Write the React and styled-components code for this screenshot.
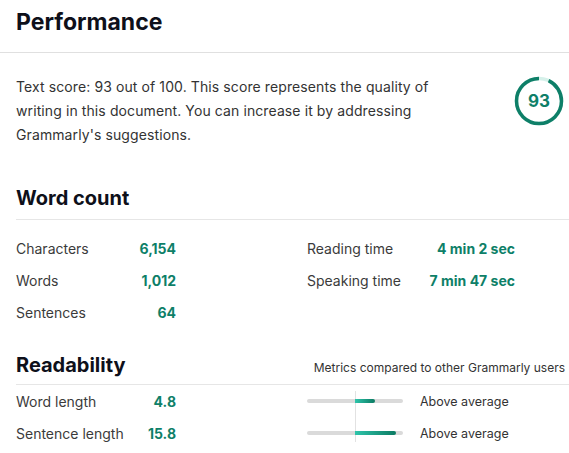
import React from "react"
import styled, { createGlobalStyle } from "styled-components"

const GlobalStyle = createGlobalStyle`
    * { box-sizing: border-box; }
    body {
        margin: 0;
        background: #fff;
        font-family: Inter, "Noto Sans", sans-serif;
        color: #0e101a;
    }`

const Page = styled.div`
    width: 569px;
    height: 453px;
    overflow: hidden;
    background: #fff;`

const TopBar = styled.div`
    padding: 8px 16px 16px;
    border-bottom: 1px solid #e0e0e0;`

const Title = styled.h1`
    margin: 0;
    font-size: 23px;
    line-height: 28px;
    font-weight: 700;
    color: #0e101a;`

const Body = styled.div`
    padding: 22px 0 0 16px;`

const Summary = styled.div`
    display: flex;
    justify-content: space-between;
    align-items: flex-start;
    padding-right: 5px;`

const SummaryText = styled.p`
    margin: 0;
    width: 450px;
    font-size: 14px;
    letter-spacing: 0.1px;
    line-height: 24px;
    color: #333;`

const ScoreWrap = styled.div`
    position: relative;
    width: 50px;
    height: 50px;
    margin-top: 1px;
    display: flex;
    align-items: center;
    justify-content: center;
    svg { position: absolute; inset: 0; }`

const ScoreNum = styled.span`
    position: relative;
    font-size: 17px;
    font-weight: 700;
    color: #0e7f68;`

const SectionHead = styled.div`
    display: flex;
    justify-content: space-between;
    align-items: baseline;
    margin-top: ${(p) => p.$top}px;
    padding-bottom: ${(p) => p.$pad}px;
    border-bottom: 1px solid #e6e6e6;`

const SectionTitle = styled.h2`
    margin: 0;
    font-size: 20px;
    line-height: 26px;
    font-weight: 700;
    color: #0e101a;`

const Note = styled.span`
    font-size: 12px;
    color: #333;
    margin-right: 4px;`

const CountGrid = styled.div`
    display: grid;
    grid-template-columns: 160px 208px;
    grid-auto-rows: 32px;
    column-gap: 131px;
    margin-top: 12px;`

const Pair = styled.div`
    display: flex;
    justify-content: space-between;
    align-items: center;
    width: ${(p) => p.$w || "auto"};`

const Label = styled.span`
    font-size: 14px;
    color: #3b3b3b;`

const Value = styled.span`
    font-size: 14px;
    font-weight: 700;
    color: #0e7f68;`

const ReadRow = styled.div`
    display: flex;
    align-items: center;
    height: 32px;`

const Track = styled.div`
    position: relative;
    width: 96px;
    height: 4px;
    margin-left: 131px;
    border-radius: 2px;
    background: #dadada;
    &::before {
        content: "";
        position: absolute;
        left: 48px;
        width: 1px;
        top: ${(p) => (p.$first ? -8 : -14)}px;
        bottom: ${(p) => (p.$first ? -14 : -7)}px;
        background: #e2e2e2;
    }`

const Fill = styled.div`
    position: absolute;
    left: 48px;
    top: 0;
    height: 4px;
    border-radius: 0 2px 2px 0;
    background: linear-gradient(90deg, #2ec4aa, #0b7a62);`

const Status = styled.span`
    margin-left: 17px;
    font-size: 12.5px;
    color: #333;`

const counts = [
    ["Characters", "6,154", "Reading time", "4 min 2 sec"],
    ["Words", "1,012", "Speaking time", "7 min 47 sec"],
    ["Sentences", "64"],
]

const readability = [
    { label: "Word length", value: "4.8", fill: 20 },
    { label: "Sentence length", value: "15.8", fill: 41 },
]

const ScoreRing = ({ score }) => {
    const r = 22.5
    const c = 2 * Math.PI * r
    const on = (score / 100) * c
    return (
        <ScoreWrap>
            <svg width="50" height="50" viewBox="0 0 50 50">
                <circle cx="25" cy="25" r={r} fill="none" stroke="#d6f1ea" strokeWidth="3.5" />
                <circle cx="25" cy="25" r={r} fill="none" stroke="#0e7f68" strokeWidth="3.5"
                    strokeDasharray={`${on} ${c}`}
                    strokeDashoffset={-(c - on)}
                    transform="rotate(-90 25 25)" />
            </svg>
            <ScoreNum>{score}</ScoreNum>
        </ScoreWrap>
    )
}

export default function App () {
    return (
        <Page>
            <GlobalStyle />
            <TopBar>
                <Title>Performance</Title>
            </TopBar>
            <Body>
                <Summary>
                    <SummaryText>
                        Text score: 93 out of 100. This score represents the quality of
                        writing in this document. You can increase it by addressing
                        Grammarly's suggestions.
                    </SummaryText>
                    <ScoreRing score={93} />
                </Summary>

                <SectionHead $top={38} $pad={8}>
                    <SectionTitle>Word count</SectionTitle>
                </SectionHead>
                <CountGrid>
                    {counts.map(([l, v, l2, v2]) => (
                        <React.Fragment key={l}>
                            <Pair>
                                <Label>{l}</Label>
                                <Value>{v}</Value>
                            </Pair>
                            {l2 ? (
                                <Pair>
                                    <Label>{l2}</Label>
                                    <Value>{v2}</Value>
                                </Pair>
                            ) : <div />}
                        </React.Fragment>
                    ))}
                </CountGrid>

                <SectionHead $top={24} $pad={6}>
                    <SectionTitle>Readability</SectionTitle>
                    <Note>Metrics compared to other Grammarly users</Note>
                </SectionHead>
                {readability.map((r, i) => (
                    <ReadRow key={r.label}>
                        <Pair $w="160px">
                            <Label>{r.label}</Label>
                            <Value>{r.value}</Value>
                        </Pair>
                        <Track $first={i === 0}>
                            <Fill style={{ width: r.fill }} />
                        </Track>
                        <Status>Above average</Status>
                    </ReadRow>
                ))}
            </Body>
        </Page>
    )
}
